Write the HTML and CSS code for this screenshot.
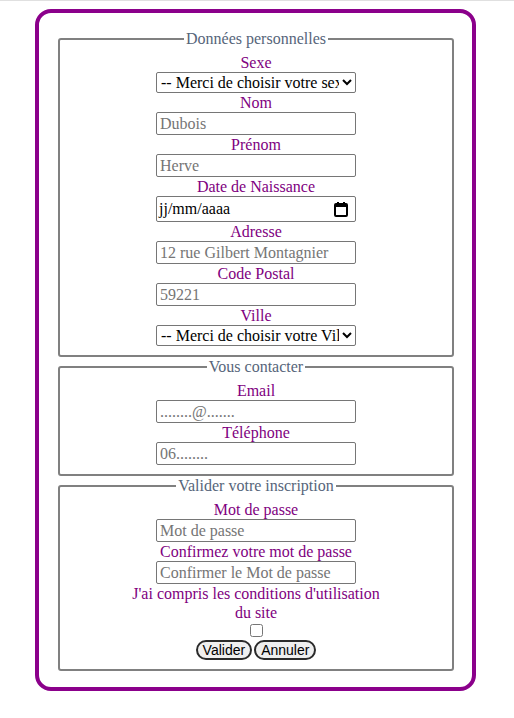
FILE: index.html
```html
<!DOCTYPE html>
<html lang="fr">
<head>
<meta charset="utf-8">
<title>Inscription</title>
<link rel="stylesheet" href="styles.css">
</head>
<body>
<div class="topline"></div>
<form class="card">
  <fieldset class="group">
    <legend class="legend">Données personnelles</legend>
    <div class="fields">
      <label class="lbl" for="sexe">Sexe</label>
      <select class="sel" id="sexe"><option>-- Merci de choisir votre sexe --</option></select>
      <label class="lbl" for="nom">Nom</label>
      <input class="txt" id="nom" type="text" placeholder="Dubois">
      <label class="lbl" for="prenom">Prénom</label>
      <input class="txt" id="prenom" type="text" placeholder="Herve">
      <label class="lbl">Date de Naissance</label>
      <div class="date">
        <span class="date-text">jj/mm/aaaa</span>
        <svg class="cal" width="14" height="16" viewBox="0 0 14 16">
          <rect x="1" y="3" width="12" height="12" rx="1" fill="none" stroke="#000" stroke-width="2"/>
          <rect x="1" y="3" width="12" height="3" fill="#000"/>
          <rect x="3" y="1" width="2" height="3" fill="#000"/>
          <rect x="9" y="1" width="2" height="3" fill="#000"/>
        </svg>
      </div>
      <label class="lbl" for="adresse">Adresse</label>
      <input class="txt" id="adresse" type="text" placeholder="12 rue Gilbert Montagnier">
      <label class="lbl" for="cp">Code Postal</label>
      <input class="txt" id="cp" type="text" placeholder="59221">
      <label class="lbl" for="ville">Ville</label>
      <select class="sel" id="ville"><option>-- Merci de choisir votre Ville --</option></select>
    </div>
  </fieldset>
  <fieldset class="group">
    <legend class="legend">Vous contacter</legend>
    <div class="fields">
      <label class="lbl" for="email">Email</label>
      <input class="txt" id="email" type="text" placeholder="........@.......">
      <label class="lbl" for="tel">Téléphone</label>
      <input class="txt" id="tel" type="text" placeholder="06........">
    </div>
  </fieldset>
  <fieldset class="group">
    <legend class="legend">Valider votre inscription</legend>
    <div class="fields">
      <label class="lbl" for="mdp">Mot de passe</label>
      <input class="txt" id="mdp" type="password" placeholder="Mot de passe">
      <label class="lbl" for="mdp2">Confirmez votre mot de passe</label>
      <input class="txt" id="mdp2" type="password" placeholder="Confirmer le Mot de passe">
      <label class="lbl lbl-wrap" for="cgu">J'ai compris les conditions d'utilisation du site</label>
      <input class="chk" id="cgu" type="checkbox">
      <div class="buttons">
        <button class="btn" type="submit">Valider</button>
        <button class="btn" type="reset">Annuler</button>
      </div>
    </div>
  </fieldset>
</form>
</body>
</html>
```
FILE: styles.css
```css
html, body {
  margin: 0;
  padding: 0;
  background: #ffffff;
}
body {
  font-family: "Liberation Serif", "Times New Roman", serif;
  font-size: 16px;
}
.topline {
  height: 1px;
  background: #e0e0e0;
}
.card {
  box-sizing: border-box;
  width: 441px;
  margin: 8px 0 0 35px;
  border: 4px solid #8b008b;
  border-radius: 16px;
  padding: 16px 18px 16px 19px;
}
.group {
  margin: 0;
  border: 2px solid #808080;
  border-radius: 3px;
  padding: 5px 10px 9px;
}
.legend {
  margin: 0 auto;
  padding: 0 2px;
  color: #56657a;
  line-height: 19px;
}
.fields {
  display: flex;
  flex-direction: column;
  align-items: center;
}
.lbl {
  display: block;
  color: #800080;
  line-height: 19px;
  text-align: center;
}
.lbl-wrap {
  max-width: 260px;
}
.txt {
  box-sizing: border-box;
  width: 200px;
  height: 23px;
  margin: 0;
  padding: 0 3px;
  border: 1px solid #767676;
  border-radius: 2px;
  font-family: "Liberation Serif", "Times New Roman", serif;
  font-size: 16px;
  color: #000;
  background: #fff;
}
.txt::placeholder {
  color: #757575;
  opacity: 1;
}
.sel {
  box-sizing: border-box;
  width: 200px;
  height: 21px;
  margin: 0;
  font-family: "Liberation Serif", "Times New Roman", serif;
  font-size: 16px;
  color: #000;
  background: #fff;
  border: 1px solid #767676;
  border-radius: 2px;
}
.date {
  box-sizing: border-box;
  width: 200px;
  height: 26px;
  display: flex;
  align-items: center;
  justify-content: space-between;
  padding: 0 7px 0 2px;
  border: 1px solid #767676;
  border-radius: 2px;
  background: #fff;
}
.date-text {
  color: #000;
  font-size: 16px;
}
.cal {
  display: block;
}
.chk {
  width: 13px;
  height: 13px;
  margin: 2px 0 3px;
}
.buttons {
  display: flex;
  gap: 2px;
}
.btn {
  height: 20px;
  margin: 0;
  padding: 0 5px;
  font-family: "Liberation Sans", Arial, sans-serif;
  font-size: 14px;
  color: #000;
  background: #efefef;
  border: 2px solid #2b2b2b;
  border-radius: 10px;
}
```
